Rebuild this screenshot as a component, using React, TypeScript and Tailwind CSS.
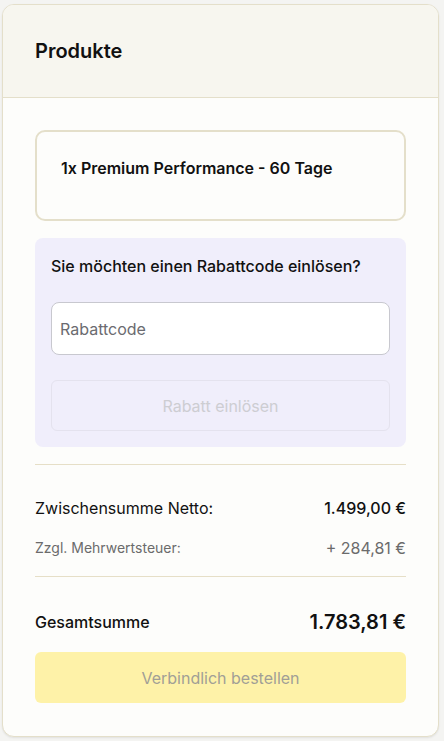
import React from "react";

export default function App() {
  return (
    <div
      className="min-h-[741px] w-[444px] bg-[#f4f4f2] pt-[4px] pl-[2px] pr-[5px] pb-[4px]"
      style={{ fontFamily: "Inter, 'Noto Sans', sans-serif" }}
    >
      <div className="w-[437px] h-[733px] rounded-[12px] border border-[#e4dfca] bg-[#fdfdfb] shadow-[0_1px_2px_rgba(0,0,0,0.08)] overflow-hidden flex flex-col">
        <div className="h-[93px] shrink-0 bg-[#f7f6ef] border-b border-[#e4dfca] px-8 flex items-center">
          <h2 className="text-[20px] leading-7 font-semibold text-[#111111]">Produkte</h2>
        </div>
        <div className="px-8 pt-8 flex flex-col">
          <div className="h-[91px] rounded-[10px] border-2 border-[#e4dfca] px-6 pt-6">
            <p className="text-[16px] leading-6 font-semibold text-[#111111]">1x Premium Performance - 60 Tage</p>
          </div>
          <div className="mt-[17px] rounded-[8px] bg-[#f0eefb] p-4 flex flex-col">
            <p className="text-[16px] leading-6 font-medium text-[#111111]">Sie möchten einen Rabattcode einlösen?</p>
            <input
              className="mt-6 h-[53px] rounded-[8px] border border-[#c8c8cf] bg-white px-2 text-[16px] text-[#333] placeholder:text-[#6b6b70] outline-none"
              placeholder="Rabattcode"
            />
            <button className="mt-[25px] h-[51px] rounded-[6px] border border-[#e4e2ee] text-[16px] text-[#cdcdd2]">
              Rabatt einlösen
            </button>
          </div>
          <div className="mt-[17px] h-px bg-[#e6dfc7]" />
          <div className="mt-[31px] flex items-center justify-between">
            <span className="text-[16px] leading-6 text-[#111111]">Zwischensumme Netto:</span>
            <span className="text-[16px] leading-6 font-medium text-[#111111]">1.499,00 €</span>
          </div>
          <div className="mt-4 flex items-center justify-between">
            <span className="text-[14px] leading-6 text-[#6b6b6b]">Zzgl. Mehrwertsteuer:</span>
            <span className="text-[16px] leading-6 text-[#6b6b6b]">+ 284,81 €</span>
          </div>
          <div className="mt-4 h-px bg-[#e6dfc7]" />
          <div className="mt-[31px] flex items-center justify-between">
            <span className="text-[16px] leading-7 font-medium text-[#111111]">Gesamtsumme</span>
            <span className="text-[20px] leading-7 font-semibold text-[#111111]">1.783,81 €</span>
          </div>
          <button className="mt-4 h-[51px] rounded-[6px] bg-[#fef2a8] text-[16px] text-[#a19f96]">
            Verbindlich bestellen
          </button>
        </div>
      </div>
    </div>
  );
}
